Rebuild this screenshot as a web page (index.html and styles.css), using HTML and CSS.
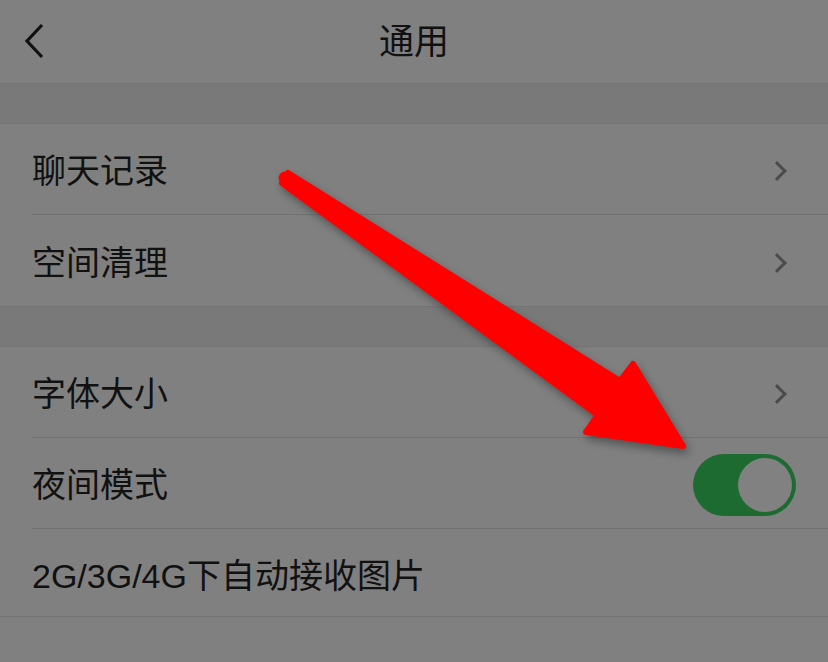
FILE: index.html
```html
<!DOCTYPE html>
<html lang="zh">
<head>
<meta charset="utf-8">
<link rel="stylesheet" href="styles.css">
</head>
<body>
<div class="screen">
  <header class="nav">
    <span class="back">
      <svg width="22" height="36" viewBox="0 0 22 36"><path d="M19 2 L4 18 L19 34" fill="none" stroke="#111" stroke-width="3.2" stroke-linejoin="miter"/></svg>
    </span>
    <h1 class="title">通用</h1>
  </header>
  <div class="gap"></div>
  <section class="group">
    <div class="row"><span class="label">聊天记录</span><span class="chev"></span></div>
    <div class="row"><span class="label">空间清理</span><span class="chev"></span></div>
  </section>
  <div class="gap"></div>
  <section class="group">
    <div class="row"><span class="label">字体大小</span><span class="chev"></span></div>
    <div class="row"><span class="label">夜间模式</span><span class="switch"><span class="knob"></span></span></div>
    <div class="row short"><span class="label">2G/3G/4G下自动接收图片</span></div>
  </section>
  <svg class="arrow" width="828" height="662" viewBox="0 0 828 662">
    <polygon points="288,173 620,381 633,364 683,446 586,432 598,415 282,183" fill="#ff0000" stroke="#ff0000" stroke-width="6" stroke-linejoin="round"/>
    <circle cx="285" cy="178" r="6.5" fill="#ff0000"/>
  </svg>
</div>
</body>
</html>
```
FILE: styles.css
```css
* { box-sizing: border-box; }
html, body { margin: 0; padding: 0; }
body {
  background: #808080;
  font-family: "Liberation Sans", "Noto Sans CJK SC", sans-serif;
  color: #111;
}
.screen {
  position: relative;
  width: 828px;
  height: 662px;
  overflow: hidden;
  background: #808080;
}
.nav {
  height: 84px;
  display: flex;
  align-items: center;
  justify-content: center;
  position: relative;
  border-bottom: 1px solid #737373;
}
.back {
  position: absolute;
  left: 23px;
  top: 23px;
  display: block;
  line-height: 0;
}
.title {
  margin: 0 0 6px 0;
  font-size: 35px;
  font-weight: 400;
  font-family: "Noto Sans CJK SC", sans-serif;
  line-height: 1;
}
.gap {
  height: 39px;
  background: #797979;
}
.group {
  border-top: 1px solid #747474;
  border-bottom: 1px solid #747474;
  background: #808080;
}
.row {
  height: 91px;
  display: flex;
  align-items: center;
  justify-content: space-between;
  margin-left: 32px;
  padding-right: 38px;
  padding-top: 4px;
  border-bottom: 1px solid #727272;
}
.row:last-child { border-bottom: none; }
.row.short { height: 87px; padding-top: 6px; }
.label {
  font-size: 34px;
  line-height: 1;
}
.chev {
  width: 14px;
  height: 14px;
  border-top: 3.5px solid #4b4b4b;
  border-right: 3.5px solid #4b4b4b;
  transform: rotate(45deg);
  margin-right: 6px;
}
.switch {
  width: 103px;
  height: 62px;
  border-radius: 31px;
  background: #1d6b31;
  display: flex;
  align-items: center;
  justify-content: flex-end;
  padding-right: 4px;
  margin-right: -6px;
}
.knob {
  width: 54px;
  height: 54px;
  border-radius: 50%;
  background: #818181;
}
.arrow {
  position: absolute;
  left: 0;
  top: 0;
  filter: drop-shadow(3px 5px 4px rgba(0,0,0,0.35));
}
```
